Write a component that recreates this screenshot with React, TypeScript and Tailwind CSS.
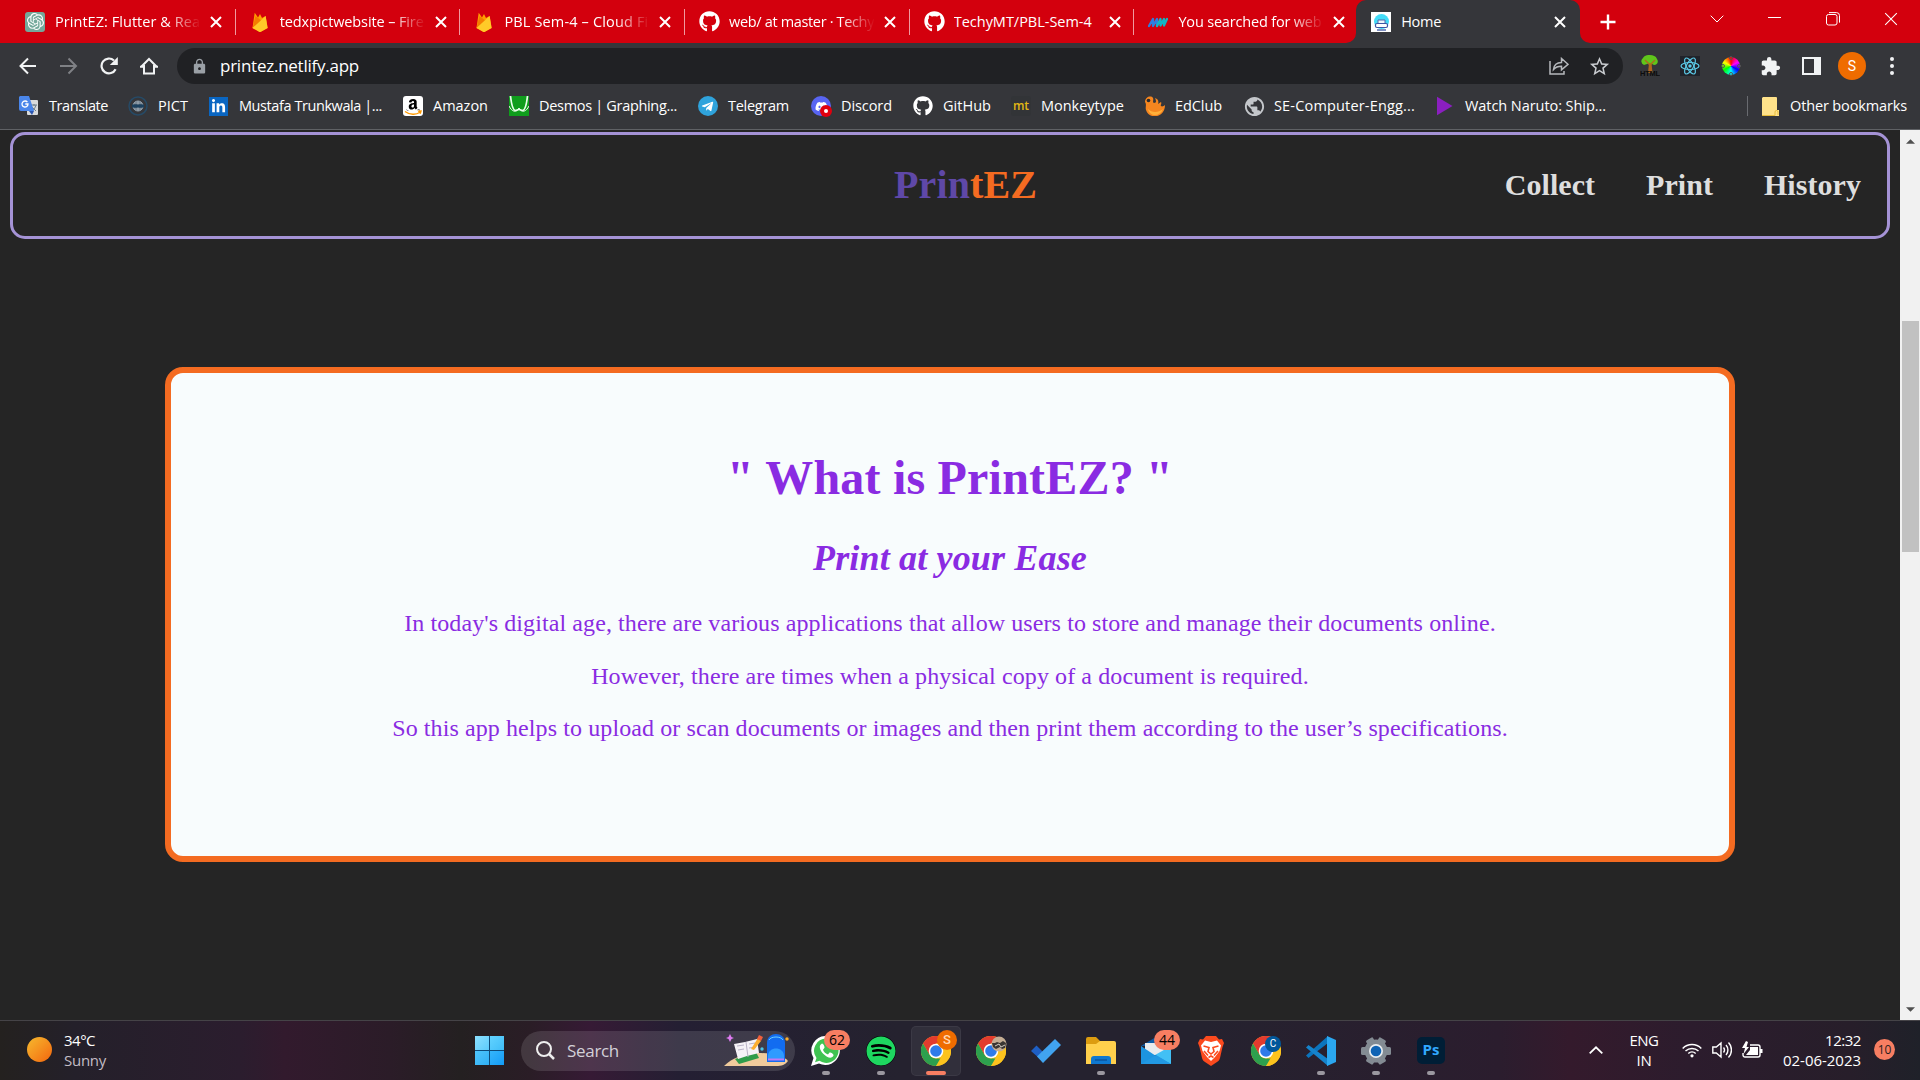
import { useLayoutEffect, useRef, type ReactNode } from "react";
import { FaAmazon, FaDiscord, FaGithub, FaLinkedinIn, FaSpotify, FaTelegramPlane } from "react-icons/fa";
import { SiOpenai } from "react-icons/si";
import { MdExtension, MdLock, MdPublic, MdStarOutline } from "react-icons/md";

/** A single line of text whose tracking is adjusted to fill a given width. */
function Fit({ w, className = "", children }: { w: number; className?: string; children: string }) {
  const ref = useRef<HTMLSpanElement>(null);
  useLayoutEffect(() => {
    const apply = () => {
      const el = ref.current;
      if (!el) return;
      el.style.letterSpacing = "0px";
      const natural = el.getBoundingClientRect().width;
      el.style.letterSpacing = `${(w - natural) / children.length}px`;
    };
    apply();
    document.fonts.ready.then(apply);
  }, [w, children]);
  return (
    <span ref={ref} className={`inline-block shrink-0 whitespace-pre ${className}`}>
      {children}
    </span>
  );
}

function Firebase() {
  return (
    <svg viewBox="0 0 20 20" className="size-5">
      <path d="M2.500 16 4.700.8 8 5.500 10 2 12 6 15.600 4l2 12-7.600 4.200z" fill="#ffa000" />
      <path d="m2.500 16 3-12L12 9z" fill="#f57c00" />
      <path d="M2.500 16 15.600 4l2 12-7.600 4.200z" fill="#ffca28" />
    </svg>
  );
}

function Cross({ size = 12, thick = 2 }: { size?: number; thick?: number }) {
  return (
    <svg viewBox="0 0 12 12" width={size} height={size}>
      <path d="M1 1 11 11M11 1 1 11" stroke="#fff" strokeWidth={thick} fill="none" />
    </svg>
  );
}

function Chrome() {
  return (
    <svg viewBox="0 0 30 30" className="size-[30px]">
      <circle cx="15" cy="15" r="15" fill="#fcc31e" />
      <path d="M2 7.5A15 15 0 0 1 28 7.5H15L8.5 19z" fill="#e33b2e" />
      <path d="M2 7.5 8.5 18.8a7.5 7.5 0 0 0 6.5 3.700h6.400L15 30A15 15 0 0 1 2 7.5z" fill="#2da04e" />
      <path d="M15 7.5h13A15 15 0 0 1 15 30l6.500-11.200z" fill="#fcc31e" />
      <circle cx="15" cy="15" r="7.300" fill="#fff" />
      <circle cx="15" cy="15" r="5.800" fill="#2f7bea" />
    </svg>
  );
}

const tabs: { icon: ReactNode; title: string; w: number; fade: boolean }[] = [
  {
    icon: (
      <span className="grid size-5 place-items-center rounded-[3px] bg-[#74a99b] text-white">
        <SiOpenai size={17} />
      </span>
    ),
    title: "PrintEZ: Flutter & Rea",
    w: 145,
    fade: true,
  },
  { icon: <Firebase />, title: "tedxpictwebsite – Fire", w: 144, fade: true },
  { icon: <Firebase />, title: "PBL Sem-4 – Cloud Fi", w: 144, fade: true },
  { icon: <FaGithub size={21} className="text-white" />, title: "web/ at master · Techy", w: 145, fade: true },
  { icon: <FaGithub size={21} className="text-white" />, title: "TechyMT/PBL-Sem-4", w: 138, fade: false },
  {
    icon: (
      <svg viewBox="0 0 20 20" className="size-5" fill="none" strokeWidth="2.300" strokeLinecap="round" strokeLinejoin="round">
        <path d="M1 14 5 7v7l4-7v7" stroke="#2f7de0" />
        <path d="m9 14 3.500-7v6.500L16 7v6.500L19 7" stroke="#12b5c5" />
      </svg>
    ),
    title: "You searched for web",
    w: 143,
    fade: true,
  },
];

const bookmarks: { icon: ReactNode; title: string; w: number; box: string }[] = [
  {
    icon: (
      <svg viewBox="0 0 20 20" className="size-5">
        <rect x="8" y="4" width="11" height="15" rx="1" fill="#d8dadc" />
        <path d="M12 9h6M15 8v2M13 15c2-1 3-3 4-6M13 11l4 4" stroke="#6d7f8c" fill="none" />
        <path d="M1 0h9l5 15H2a2 2 0 0 1-2-2V1z" fill="#4a86ea" />
        <path d="m10 15 3 4 2-4z" fill="#2c56b0" />
        <path d="M8.400 6.200A3 3 0 1 0 9 8H6.300" stroke="#fff" strokeWidth="1.300" fill="none" />
      </svg>
    ),
    title: "Translate",
    w: 59,
    box: "w-[109px]",
  },
  {
    icon: (
      <svg viewBox="0 0 20 20" className="size-5" fill="none">
        <circle cx="10" cy="10" r="9" stroke="#264a66" strokeWidth="1.500" />
        <circle cx="10" cy="10" r="5" fill="#4c5f70" stroke="#93a1ad" />
        <path d="M6 7h8M6 13h8M10 5v10" stroke="#a4afb8" />
        <rect x="4" y="8.500" width="12" height="3" fill="#1b405e" />
      </svg>
    ),
    title: "PICT",
    w: 30,
    box: "w-[81px]",
  },
  {
    icon: (
      <span className="grid size-[19px] place-items-center bg-[#0a66c2] text-white">
        <FaLinkedinIn size={15} />
      </span>
    ),
    title: "Mustafa Trunkwala |...",
    w: 143,
    box: "w-[194px]",
  },
  {
    icon: (
      <span className="relative grid size-5 place-items-center rounded-[3px] bg-white text-black">
        <FaAmazon size={16} />
        <svg viewBox="0 0 20 20" className="absolute inset-0 size-5">
          <path d="M1 14.500h18V19H1z" fill="#fff" />
          <path d="M2 15.500c5 3.600 11 3.600 15 .8M15.200 15.300l2.800-.2-.8 2.600" stroke="#ff9900" strokeWidth="1.400" fill="none" />
        </svg>
      </span>
    ),
    title: "Amazon",
    w: 55,
    box: "w-[106px]",
  },
  {
    icon: (
      <svg viewBox="0 0 20 20" className="size-5" fill="none" stroke="#e8ffe8">
        <rect width="20" height="20" fill="#0f9d1c" stroke="none" />
        <path d="M0 10c3 6 7 7 10 2 3 5 7 4 10-2" strokeWidth="1" />
        <path d="M1.500 0c1 9 2.500 14.500 5 14.500 1.500 0 2-1 3.500-1s2 1 3.500 1c2.500 0 4-5.500 5-14.500" strokeWidth="1.700" />
      </svg>
    ),
    title: "Desmos | Graphing...",
    w: 138,
    box: "w-[189px]",
  },
  {
    icon: (
      <span className="grid size-5 place-items-center rounded-full bg-[#2fa3dc] pr-0.5 text-white">
        <FaTelegramPlane size={13} />
      </span>
    ),
    title: "Telegram",
    w: 61,
    box: "w-[113px]",
  },
  {
    icon: (
      <span className="relative grid size-5 place-items-center rounded-full bg-[#5865f2] text-white">
        <FaDiscord size={13} />
        <span className="absolute -right-px -bottom-px grid size-3 place-items-center rounded-full bg-[#e0000f]">
          <span className="size-1 rounded-full bg-white" />
        </span>
      </span>
    ),
    title: "Discord",
    w: 51,
    box: "w-[102px]",
  },
  { icon: <FaGithub size={20} className="text-white" />, title: "GitHub", w: 48, box: "w-[98px]" },
  {
    icon: (
      <span className="flex h-5 w-5 items-center justify-center rounded-[3px] bg-[#323437] text-[12px] leading-none font-semibold text-[#e2b714]">
        mt
      </span>
    ),
    title: "Monkeytype",
    w: 83,
    box: "w-[134px]",
  },
  {
    icon: (
      <svg viewBox="0 0 20 20" className="size-5">
        <path d="M0 6C0 1 6-1 8 2c1 2-1 4 1 5 3 0 2-3 1-5 3 1 4 3 3 6l3-2c1 2-1 3 0 4 1 1 3 0 4-1 0 13-16 15-19 5C0 11 2 9 0 6z" fill="#f6861f" />
        <path d="M3 13c4 4 10 4 15 0-3 8-13 8-15 0z" fill="#ffb03a" />
        <circle cx="3.500" cy="4.500" r="1.800" fill="#292a2d" />
      </svg>
    ),
    title: "EdClub",
    w: 47,
    box: "w-[99px]",
  },
  { icon: <MdPublic size={23} className="-mx-[1.500px] text-[#c4c7cb]" />, title: "SE-Computer-Engg...", w: 141, box: "w-[191px]" },
  {
    icon: (
      <svg viewBox="0 0 20 20" className="size-5">
        <path d="M2 .8 17.500 10 2 19.200z" fill="#8b1fc0" />
      </svg>
    ),
    title: "Watch Naruto: Ship...",
    w: 141,
    box: "w-[180px]",
  },
];

function TabStrip() {
  return (
    <div className="flex h-[43px] bg-[#d3000d] pl-[11px]">
      {tabs.map((t, i) => (
        <div key={i} className="flex w-[224.700px] shrink-0 items-center pl-3.5">
          <span className="flex w-[30px] shrink-0 items-center">{t.icon}</span>
          <span
            className={`w-[145px] overflow-hidden ${t.fade ? "[mask-image:linear-gradient(to_right,black_112px,transparent_146px)]" : ""}`}
          >
            <Fit w={t.w}>{t.title}</Fit>
          </span>
          <span className="ml-[10px] flex">
            <Cross />
          </span>
          <span className={`ml-auto h-[26px] w-px ${i < 5 ? "bg-[#f09a9f]" : ""}`} />
        </div>
      ))}
      <div className="-ml-[13px] flex h-[43px] w-[10px] shrink-0 items-end bg-[#35363a]">
        <span className="h-[43px] w-[10px] rounded-br-[10px] bg-[#d3000d]" />
      </div>
      <div className="flex w-[224px] shrink-0 items-center rounded-t-[10px] bg-[#35363a] pl-[15px]">
        <span className="grid size-5 place-items-center bg-white">
          <svg viewBox="0 0 20 20" className="size-5" fill="none">
            <circle cx="10.500" cy="9.500" r="7.500" fill="#43dcf7" />
            <path d="M7 12V8h7v4" fill="#eef6fb" stroke="#5468ad" />
            <rect x="4.500" y="11.500" width="12" height="4" rx="1.500" fill="#fff" stroke="#3d56a3" strokeWidth="1.200" />
            <path d="M6 18h9" stroke="#3d56a3" strokeWidth="1.300" />
          </svg>
        </span>
        <Fit w={40} className="ml-2.5">Home</Fit>
        <span className="mr-[14px] ml-auto flex">
          <Cross />
        </span>
      </div>
      <div className="h-[43px] w-[10px] shrink-0 bg-[#35363a]">
        <div className="h-[43px] w-[10px] rounded-bl-[10px] bg-[#d3000d]" />
      </div>
      <div className="flex grow items-center">
        <svg viewBox="0 0 16 16" className="ml-[10px] size-4">
          <path d="M8 .5v15M.5 8h15" stroke="#fff" strokeWidth="2.400" />
        </svg>
        <svg viewBox="0 0 14 8" className="mb-1.5 ml-[94px] h-2 w-3.5" fill="none">
          <path d="M.7.7 7 7 13.300.7" stroke="#fff" />
        </svg>
        <span className="mb-2 ml-[44px] h-px w-[13px] bg-white" />
        <svg viewBox="0 0 14 14" className="mb-1.5 ml-[45px] size-3.5" fill="none" stroke="#fff">
          <rect x=".5" y="2.500" width="10.500" height="10.500" rx="2" />
          <path d="M3 .6h7.500a3 3 0 0 1 3 3v7" />
        </svg>
        <span className="mb-1.5 ml-[44px] flex">
          <Cross size={14} thick={0.9} />
        </span>
      </div>
    </div>
  );
}

function Toolbar() {
  return (
    <div className="flex h-[46px] items-center bg-[#35363a]">
      <svg viewBox="0 0 18 18" className="ml-[19px] size-[18px]" fill="none" stroke="#f1f3f4" strokeWidth="2">
        <path d="M17 9H2M9 1.500 1.500 9 9 16.500" />
      </svg>
      <svg viewBox="0 0 18 18" className="ml-[23px] size-[18px]" fill="none" stroke="#7f8185" strokeWidth="2">
        <path d="M0 9h16M8.500 1.500 16 9l-7.500 7.500" />
      </svg>
      <svg viewBox="0 0 18 18" className="ml-[22px] size-[18px]" fill="none" stroke="#f1f3f4" strokeWidth="2.200">
        <path d="M15.600 12.200A7.400 7.400 0 1 1 14 3.500" />
        <path d="M17.800 0v8h-8z" fill="#f1f3f4" stroke="none" />
      </svg>
      <svg viewBox="0 0 18 18" className="ml-[22px] size-[18px]" fill="none" stroke="#f1f3f4" strokeWidth="2">
        <path d="M1.500 9.500 9 2l7.500 7.500M4 8v8.500h10V8" />
        <path d="M0 9.700h4M14 9.700h4" />
      </svg>
      <div className="ml-[19px] flex h-9 w-[1446px] items-center rounded-full bg-[#202124]">
        <MdLock size={17} className="ml-[14px] text-[#9aa0a6]" />
        <Fit w={139} className="mb-px ml-[12px] text-[17px] leading-none">printez.netlify.app</Fit>
        <svg viewBox="0 0 20 18" className="mr-[19px] ml-auto h-[18px] w-5" fill="none" stroke="#b6b9bd" strokeWidth="1.500">
          <path d="M1 4v13h14v-3" />
          <path d="M4.500 12.500C5 8 8 5.500 12.500 5.500V1.500l6.500 5.800-6.500 5.500V9.300c-3.500 0-6 .9-8 3.200z" />
        </svg>
        <MdStarOutline size={23} className="mr-[12px] text-[#c8cbcf]" />
      </div>
      <svg viewBox="0 0 20 22" className="ml-[17px] h-[22px] w-5">
        <path d="M9 8h2.500l1 10H8z" fill="#b4651d" />
        <path d="M4 10a4 4 0 0 1-1-7C5-.5 9 0 10 0c3 0 6 1 7 4 2 3 0 6-3 6l-4-2z" fill="#5fc61b" />
        <path d="m5 5 5 5 5-5" stroke="#a8701c" strokeWidth="1.500" fill="none" />
        <text x="0" y="21" fontSize="7.500" fontWeight="900" fontFamily="Liberation Sans" textLength="20" fill="#0c0c0c">HTML</text>
      </svg>
      <span className="ml-5 grid size-5 place-items-center bg-[#20232a]">
        <svg viewBox="-10 -10 20 20" className="size-5" fill="none" stroke="#5ccbe8" strokeWidth="1.200">
          <ellipse rx="9" ry="3.500" />
          <ellipse rx="9" ry="3.500" transform="rotate(60)" />
          <ellipse rx="9" ry="3.500" transform="rotate(120)" />
          <circle r="1.700" fill="#5ccbe8" stroke="none" />
        </svg>
      </span>
      <span className="relative ml-[22px] size-[18px] rounded-full bg-[conic-gradient(#f00,#f0f,#00f,#0ff,#0f0,#ff0,#f00)]">
        <span className="absolute -top-px left-[7px] size-1 rounded-full border border-[#555]" />
        <span className="absolute -bottom-px left-[7px] size-1 rounded-full border border-[#555]" />
        <span className="absolute top-[7px] -left-px size-1 rounded-full border border-[#555]" />
        <span className="absolute top-[7px] -right-px size-1 rounded-full border border-[#555]" />
      </span>
      <MdExtension size={21} className="ml-[20px] text-[#f1f3f4]" />
      <span className="ml-[21px] h-[18px] w-[19px] border-2 border-r-[7px] border-[#f1f3f4]" />
      <span className="ml-[17px] grid size-7 place-items-center rounded-full bg-[#ef6c00] font-[Roboto] text-[14px]">S</span>
      <span className="ml-[24px] flex flex-col gap-[3px]">
        <span className="size-1 rounded-full bg-[#f1f3f4]" />
        <span className="size-1 rounded-full bg-[#f1f3f4]" />
        <span className="size-1 rounded-full bg-[#f1f3f4]" />
      </span>
    </div>
  );
}

function BookmarkBar() {
  return (
    <div className="flex h-[41px] items-center border-b border-[#5f6165] bg-[#35363a] pb-1.5 pl-[19px]">
      {bookmarks.map((b) => (
        <div key={b.title} className={`flex shrink-0 items-center ${b.box}`}>
          <span className="flex w-[30px] shrink-0 items-center">{b.icon}</span>
          <Fit w={b.w}>{b.title}</Fit>
        </div>
      ))}
      <span className="mr-[14px] ml-auto h-5 w-px bg-[#696b70]" />
      <svg viewBox="0 0 17 19" className="mr-[11px] h-[19px] w-[17px]">
        <path d="M1 0h13a1 1 0 0 1 1 1v12h2v6H1a1 1 0 0 1-1-1V1z" fill="#ffe28a" />
        <path d="M13 18.500V15a1.500 1.500 0 0 1 3 0v3" fill="none" stroke="#e8bd3c" />
        <path d="M0 18.500h13" stroke="#e8bd3c" />
      </svg>
      <Fit w={117} className="mr-[13px]">Other bookmarks</Fit>
    </div>
  );
}

function WebPage() {
  return (
    <div className="flex h-[890px] bg-[#252525] font-['Liberation_Serif',serif]">
      <main className="flex grow flex-col px-2.5 pt-0.5">
        <nav className="grid h-[107px] grid-cols-[1fr_auto_1fr] items-center rounded-[15px] border-[3px] border-[#a593d6] pr-[26px] pb-0.5 font-bold">
          <span />
          <h1 className="ml-[57px] text-[40px] leading-none tracking-[0.1px] text-[#5f48a8]">
            Prin<span className="text-[#f46b21]">tEZ</span>
          </h1>
          <div className="flex justify-end gap-[51px] text-[30px] leading-none tracking-[0.05px] text-[#dedede]">
            <a>Collect</a>
            <a>Print</a>
            <a>History</a>
          </div>
        </nav>
        <section className="mx-[155px] mt-32 flex h-[495px] flex-col items-center rounded-[18px] border-[6px] border-[#f46b21] bg-[#f8fcfd] pt-[78px] text-[#8a2be2]">
          <h2 className="text-[48px] leading-[54px] font-bold tracking-[0.2px]">{'" What is PrintEZ? "'}</h2>
          <h3 className="mt-[33px] text-[36px] leading-10 font-bold tracking-[0.16px] italic">Print at your Ease</h3>
          <div className="mt-[31px] flex flex-col items-center gap-6 text-[24px] leading-[28.500px] tracking-[0.095px]">
            <p>In today's digital age, there are various applications that allow users to store and manage their documents online.</p>
            <p>However, there are times when a physical copy of a document is required.</p>
            <p>So this app helps to upload or scan documents or images and then print them according to the user’s specifications.</p>
          </div>
        </section>
      </main>
      <aside className="flex w-5 shrink-0 flex-col items-center bg-[#f1f1f1]">
        <svg viewBox="0 0 10 5" className="mt-[9px] h-[5px] w-[9px]">
          <path d="M5 0l5 5H0z" fill="#505050" />
        </svg>
        <div className="mt-[177px] h-[231px] w-[17px] bg-[#c1c1c1]" />
        <svg viewBox="0 0 10 5" className="mt-auto mb-[8px] h-[5px] w-[9px]">
          <path d="M0 0h10L5 5z" fill="#505050" />
        </svg>
      </aside>
    </div>
  );
}

const apps: { icon: ReactNode; badge?: ReactNode; state?: "open" | "active" }[] = [
  {
    icon: (
      <svg viewBox="0 0 30 30" className="size-[30px]">
        <path d="M15.500 0A14.500 14.500 0 1 1 8 27.500L0 30l2.500-8A14.500 14.500 0 0 1 15.500 0z" fill="#fff" />
        <path d="M15.500 2.500a12.200 12.200 0 1 1-7 22.300L4 26.300l1.500-4.300A12.200 12.200 0 0 1 15.500 2.500z" fill="#3fc351" />
        <path d="M11 7.500c-4 2-2 7 1.500 10.500 4 4 8.500 5 10 1.500.5-1.500-3-3.500-4-3l-1.500 2c-2-.5-4.500-3-5-4.800l1.500-1.900c.3-1.500-1.500-4.500-2.500-4.300z" fill="#fff" />
      </svg>
    ),
    badge: (
      <span className="absolute -top-[6px] left-[23px] grid h-5 w-[26px] place-items-center rounded-full bg-[#f77e62] text-[14px] leading-none text-black">
        62
      </span>
    ),
    state: "open",
  },
  {
    icon: <FaSpotify size={30} className="rounded-full bg-black text-[#1ed760]" />,
    state: "open",
  },
  {
    icon: <Chrome />,
    badge: (
      <span className="absolute -top-[6px] left-[26px] grid size-5 place-items-center rounded-full bg-[#ef6c00] font-[Roboto] text-[13px] leading-none font-medium text-[#ffd9b5]">
        S
      </span>
    ),
    state: "active",
  },
  {
    icon: <Chrome />,
    badge: (
      <svg viewBox="0 0 16 16" className="absolute top-0 left-[25px] size-4">
        <circle cx="8" cy="8" r="7.500" fill="#c4ad94" />
        <path d="M1 7h3l2-1 3 1 3-2 3 2-1 5-3 1-2-2-4 2-3-2z" fill="#3a3633" />
        <path d="M4 10 8 8l2 3 4-2" stroke="#d5cdc3" fill="none" />
      </svg>
    ),
  },
  {
    icon: (
      <svg viewBox="0 0 30 26" className="h-[26px] w-[30px]">
        <path d="m0 13 5.500-5.500 8 8-.5 9z" fill="#1e5fc4" />
        <path d="M6 18.500 24 1l6 6-18 18z" fill="#41a3ef" />
      </svg>
    ),
  },
  {
    icon: (
      <svg viewBox="0 0 30 28" className="h-7 w-[30px]">
        <path d="M0 2a2 2 0 0 1 2-2h8l4 4H28v6H0z" fill="#dc9c10" />
        <path d="M0 7h10l4-3h14a2 2 0 0 1 2 2v21H0z" fill="#ffd04c" />
        <path d="M5 27v-5a3 3 0 0 1 3-3h14a3 3 0 0 1 3 3v5z" fill="#0f78cf" />
        <path d="M9 23h12" stroke="#0a4f96" strokeWidth="1.300" />
      </svg>
    ),
    state: "open",
  },
  {
    icon: (
      <svg viewBox="0 0 30 28" className="h-7 w-[30px]">
        <path d="M0 9 15 0l15 9z" fill="#0c59a4" />
        <path d="M4 6h22v12H4z" fill="#e9ebee" />
        <path d="M0 9l15 10L30 9v18H0z" fill="#1c94e0" />
        <path d="M30 9v18L14 18z" fill="#42c0f5" />
        <path d="M0 27 15 18l15 9z" fill="#2299e3" />
      </svg>
    ),
    badge: (
      <span className="absolute -top-[6px] left-[23px] grid h-5 w-[26px] place-items-center rounded-full bg-[#f77e62] text-[14px] leading-none text-black">
        44
      </span>
    ),
  },
  {
    icon: (
      <svg viewBox="0 0 26 30" className="h-[30px] w-[26px]">
        <path d="M8 0h10l3 3.500 3-.5 2 4-1.500 4L22 22c-.5 2-1.500 3-3 4l-6 4-6-4c-1.500-1-2.500-2-3-4L1.500 11 0 7l2-4 3 .5z" fill="#fb4a1e" />
        <path d="M7 4.500 13 6l6-1.500L23 9.500l-1.500 5.500-4.500 6-4 4-4-4-4.500-6L3 9.500z" fill="#fff" />
        <path d="m5.500 10 5.500 1.500-1 4 3 2.500 3-2.500-1-4 5.500-1.500M6 15l4 4.500M20 15l-4 4.500M10.500 21.500 13 20l2.500 1.500" stroke="#fb4a1e" strokeWidth="1.600" fill="none" />
      </svg>
    ),
  },
  {
    icon: <Chrome />,
    badge: (
      <span className="absolute top-0 left-[24px] grid size-4 place-items-center rounded-full bg-[#01579b] font-[Roboto] text-[10px] leading-none text-white">
        C
      </span>
    ),
  },
  {
    icon: (
      <svg viewBox="0 0 30 30" className="size-[30px]">
        <path d="M0 19.500 2.500 22 22 7V0z" fill="#0b74bd" />
        <path d="M0 11.500 2.500 9 22 23v7z" fill="#1583cc" />
        <path d="m21 0 9 4v22l-9 4z" fill="#2ba7f0" />
      </svg>
    ),
    state: "open",
  },
  {
    icon: (
      <svg viewBox="-15 -15 30 30" className="size-[30px]">
        <g fill="#838b93">
          <circle r="11.500" />
          <rect x="-4" y="-14" width="8" height="28" rx="1.500" transform="rotate(30)" />
          <rect x="-4" y="-15" width="8" height="30" rx="1.500" transform="rotate(90)" />
          <rect x="-4" y="-14" width="8" height="28" rx="1.500" transform="rotate(150)" />
        </g>
        <circle r="7" fill="#e9edf0" />
        <circle r="5.300" fill="#0f63b4" />
      </svg>
    ),
    state: "open",
  },
  {
    icon: (
      <span className="grid h-[27px] w-[28px] place-items-center rounded-[5px] bg-[#001e36] pb-0.5 text-[15px] leading-none font-bold text-[#31a8ff]">
        Ps
      </span>
    ),
    state: "open",
  },
];

function Taskbar() {
  return (
    <div className="flex h-[60px] items-center border-t border-[#454347] bg-[linear-gradient(to_right,#24211f_0px,#24202a_75px,#2b1d2e_240px,#321a2d_285px,#2b1c28_390px,#242021_460px,#2a1d26_530px,#361a35_590px,#241f33_680px,#25222f_900px,#25222f_1200px,#2b1d2e_1500px,#341a2c_1570px,#2c1c2d_1690px,#271e2a_1850px,#1f2129_1920px)] text-[15px]">
      <div className="flex w-[475px] items-center gap-3 pb-0.5 pl-[27px]">
        <span className="size-[25px] rounded-full bg-linear-to-br from-[#f4b92e] to-[#f2640c]" />
        <div className="flex flex-col items-start leading-5">
          <Fit w={31}>34°C</Fit>
          <Fit w={42} className="text-[#c3bdc5]">Sunny</Fit>
        </div>
      </div>
      <div className="grid grid-cols-2 gap-px bg-[#0d4a78]">
        <span className="size-[14px] bg-linear-to-br from-[#8be0ff] to-[#5bcbfb]" />
        <span className="size-[14px] bg-linear-to-br from-[#62d3ff] to-[#3fbdf8]" />
        <span className="size-[14px] bg-linear-to-br from-[#4fc5fb] to-[#2fb0f5]" />
        <span className="size-[14px] bg-linear-to-br from-[#35b5fa] to-[#119cf6]" />
      </div>
      <div className="ml-[17px] flex h-10 w-[274px] items-center overflow-hidden rounded-full bg-white/12">
        <svg viewBox="0 0 19 19" className="ml-[15px] size-[19px]" fill="none" stroke="#eee" strokeWidth="2">
          <circle cx="8" cy="8" r="7" />
          <path d="m13 13 5 5" strokeWidth="2.500" />
        </svg>
        <Fit w={52} className="ml-[12px] text-[17px] text-[#d3d0d8]">Search</Fit>
        <svg viewBox="0 0 66 34" className="mt-px mr-[5px] ml-auto h-[34px] w-[66px]">
          <path d="M0 32C8 24 18 20 34 19c14 0 26 3 30 8-3 4-6 5-12 5z" fill="#f0cb9c" />
          <path d="m11 25 21-7 3 6-20 6z" fill="#2f9c4a" />
          <path d="m10 10 11-2 12-3 2 14-12 3-9 3z" fill="#f5f2f7" />
          <path d="m22 8 2 15M13 12l7-1M14 16l6-1M25 10l6-1M25 14l7-1" stroke="#b9b2c7" />
          <path d="M27 15 34 4l3 3-7 9z" fill="#fcae2f" />
          <path d="m33 5 2-4 4 2-2 4z" fill="#f0603c" />
          <path d="m6 0 1.500 3L10 4 7.500 5 6 8 4.500 5 2 4l2.500-1z" fill="#dd7bf0" />
          <path d="M43 9c0-12 18-12 18 0v19H43z" fill="#126cf0" />
          <path d="M44 22c0-10 16-10 16 0v3H44z" fill="#2f9bff" />
          <path d="M45 6c2-4 12-4 14 0" stroke="#6fd0ff" fill="none" />
          <path d="M44 25.500h16" stroke="#c07bf7" strokeWidth="2" />
          <circle cx="63" cy="5" r="1.700" fill="#fcae2f" />
          <circle cx="38" cy="15" r="1.700" fill="#4cc6e8" />
        </svg>
      </div>
      <div className="ml-[6px] flex gap-[5px]">
        {apps.map((a, i) => (
          <div
            key={i}
            className={`flex h-[50px] w-[50px] flex-col items-center rounded-[5px] pt-2.5 ${
              a.state === "active" ? "bg-white/6 ring-1 ring-white/5 ring-inset" : ""
            }`}
          >
            <div className="relative flex h-[30px] w-[50px] items-center justify-center">
              {a.icon}
              {a.badge}
            </div>
            {a.state === "open" && <span className="mt-[5px] h-1 w-2 rounded-full bg-[#9b98a0]" />}
            {a.state === "active" && <span className="mt-[5px] h-1 w-5 rounded-full bg-[#f77e62]" />}
          </div>
        ))}
      </div>
      <div className="mr-[25px] ml-auto flex items-center pb-0.5">
        <svg viewBox="0 0 14 8" className="h-2 w-3.5" fill="none" stroke="#fff" strokeWidth="1.800">
          <path d="m.7 7.300 6.300-6 6.300 6" />
        </svg>
        <div className="ml-[26px] flex w-[30px] flex-col items-center leading-5">
          <Fit w={29}>ENG</Fit>
          <Fit w={15}>IN</Fit>
        </div>
        <svg viewBox="0 0 20 16" className="ml-[23px] h-4 w-5" fill="none" stroke="#fff" strokeWidth="1.500">
          <path d="M.7 6.500a13 13 0 0 1 18.600 0M3.500 9a9.500 9.500 0 0 1 13 0M6.300 11.500a5.500 5.500 0 0 1 7.400 0" />
          <circle cx="10" cy="13.800" r="1.600" fill="#fff" stroke="none" />
        </svg>
        <svg viewBox="0 0 20 18" className="ml-[10px] h-[18px] w-5" fill="none" stroke="#fff" strokeWidth="1.400">
          <path d="M.8 6v6h3.500l4.700 4V2L4.300 6zM11.500 6.500a4 4 0 0 1 0 5M14 4a7.500 7.500 0 0 1 0 10M16.500 1.500a11 11 0 0 1 0 15" />
        </svg>
        <svg viewBox="0 0 21 18" className="ml-[10px] h-[18px] w-[21px]">
          <path d="M8 4h8a2 2 0 0 1 2 2v8a2 2 0 0 1-2 2H3a2 2 0 0 1-2-2v-2" fill="none" stroke="#fff" strokeWidth="1.400" />
          <path d="M8 6h8v8H4l4-5zM18 8h2.500v4H18zM4 0 0 7h3l-1.500 6L7 6H4.500L6 1z" fill="#fff" />
        </svg>
        <div className="ml-[20px] flex w-[78px] flex-col items-end leading-5">
          <Fit w={36}>12:32</Fit>
          <Fit w={78}>02-06-2023</Fit>
        </div>
        <span className="ml-[13px] grid size-[21px] place-items-center rounded-full bg-[#f77e62] text-[12px] leading-none text-[#2b1c1c]">
          10
        </span>
      </div>
    </div>
  );
}

export default function App() {
  return (
    <div className="flex h-[1080px] w-[1920px] flex-col overflow-hidden bg-[#252525] font-['Open_Sans','Noto_Sans',sans-serif] text-[14.500px] text-white">
      <TabStrip />
      <Toolbar />
      <BookmarkBar />
      <WebPage />
      <Taskbar />
    </div>
  );
}
